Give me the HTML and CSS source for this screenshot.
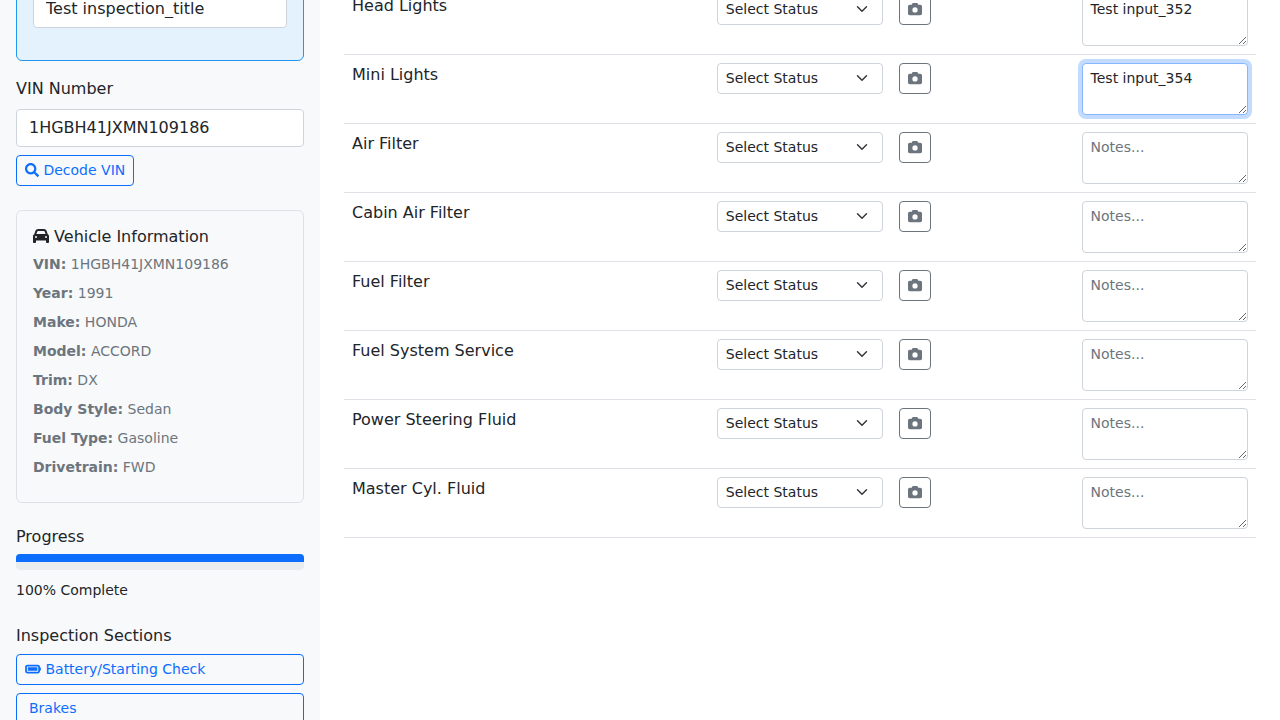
FILE: index.html
```html
<!DOCTYPE html>
<html lang="en">
<head>
<meta charset="utf-8">
<meta name="viewport" content="width=device-width, initial-scale=1">
<title>Vehicle Inspection</title>
<link rel="stylesheet" href="styles.css">
</head>
<body>
<svg class="sprite" aria-hidden="true">
  <symbol id="camera" viewBox="0 0 512 512"><path d="M149.1 64.8L138.7 96H64C28.7 96 0 124.7 0 160V416c0 35.3 28.7 64 64 64H448c35.3 0 64-28.7 64-64V160c0-35.3-28.7-64-64-64H373.3L362.9 64.8C356.4 45.2 338.1 32 317.4 32H194.6c-20.7 0-39 13.2-45.5 32.8zM256 192a96 96 0 1 1 0 192 96 96 0 1 1 0-192z"/></symbol>
</svg>
<div class="app">
  <aside class="sidebar">
    <div class="sidebar-content">
      <div class="title-card">
        <input class="input" type="text" value="Test inspection_title" aria-label="Inspection title">
      </div>
      <div class="vin">
        <label class="label" for="vin">VIN Number</label>
        <input class="input" id="vin" type="text" value="1HGBH41JXMN109186">
        <button class="btn btn-primary" type="button"><svg class="icon" viewBox="0 0 512 512" aria-hidden="true"><path d="M505 442.7L405.3 343c-4.5-4.5-10.6-7-17-7H372c27.6-35.3 44-79.7 44-128C416 93.1 322.9 0 208 0S0 93.1 0 208s93.1 208 208 208c48.3 0 92.7-16.4 128-44v16.3c0 6.4 2.5 12.5 7 17l99.7 99.7c9.4 9.4 24.6 9.4 33.9 0l28.3-28.3c9.4-9.4 9.4-24.6.1-34zM208 336c-70.7 0-128-57.2-128-128 0-70.7 57.2-128 128-128 70.7 0 128 57.2 128 128 0 70.7-57.2 128-128 128z"/></svg> Decode VIN</button>
      </div>
      <section class="info-card">
        <h2 class="heading"><svg class="icon icon-lg" viewBox="0 0 512 512" aria-hidden="true"><path d="M135.2 117.4L109.1 192H402.9l-26.1-74.6C372.3 104.6 360.2 96 346.6 96H165.4c-13.6 0-25.7 8.6-30.2 21.4zM39.6 196.8L74.8 96.3C88.3 57.8 124.6 32 165.4 32H346.6c40.8 0 77.1 25.8 90.6 64.3l35.2 100.5c23.2 9.6 39.6 32.5 39.6 59.2V400v48c0 17.7-14.3 32-32 32H448c-17.7 0-32-14.3-32-32V400H96v48c0 17.7-14.3 32-32 32H32c-17.7 0-32-14.3-32-32V400 256c0-26.7 16.4-49.6 39.6-59.2zM128 288a32 32 0 1 0 -64 0 32 32 0 1 0 64 0zm288 32a32 32 0 1 0 0-64 32 32 0 1 0 0 64z"/></svg> Vehicle Information</h2>
        <p class="detail"><strong>VIN:</strong> 1HGBH41JXMN109186</p>
        <p class="detail"><strong>Year:</strong> 1991</p>
        <p class="detail"><strong>Make:</strong> HONDA</p>
        <p class="detail"><strong>Model:</strong> ACCORD</p>
        <p class="detail"><strong>Trim:</strong> DX</p>
        <p class="detail"><strong>Body Style:</strong> Sedan</p>
        <p class="detail"><strong>Fuel Type:</strong> Gasoline</p>
        <p class="detail"><strong>Drivetrain:</strong> FWD</p>
      </section>
      <section class="progress-block">
        <h2 class="heading">Progress</h2>
        <div class="progress" role="progressbar" aria-label="Progress" aria-valuenow="100" aria-valuemin="0" aria-valuemax="100">
          <div class="progress-bar" style="width: 100%"></div>
        </div>
        <p class="progress-text">100% Complete</p>
      </section>
      <nav class="sections">
        <h2 class="heading">Inspection Sections</h2>
        <button class="btn btn-primary btn-block" type="button"><svg class="icon icon-wide" viewBox="0 0 576 512" aria-hidden="true"><path d="M464 160c8.8 0 16 7.2 16 16V336c0 8.8-7.2 16-16 16H80c-8.8 0-16-7.2-16-16V176c0-8.8 7.2-16 16-16H464zM80 96C35.8 96 0 131.8 0 176V336c0 44.2 35.8 80 80 80H464c44.2 0 80-35.8 80-80V320c17.7 0 32-14.3 32-32V224c0-17.7-14.3-32-32-32V176c0-44.2-35.8-80-80-80H80zm368 96H96V320H448V192z"/></svg> Battery/Starting Check</button>
        <button class="btn btn-primary btn-block" type="button"><span class="icon-empty"></span>Brakes</button>
      </nav>
    </div>
  </aside>
  <main class="main">
    <table class="checks">
      <colgroup><col class="col-name"><col class="col"><col class="col"><col class="col"></colgroup>
      <tbody>
        <tr><td>Head Lights</td><td><select class="select" aria-label="Head Lights status"><option>Select Status</option></select></td><td><button class="btn btn-photo" type="button" aria-label="Add photo"><svg class="icon"><use href="#camera"/></svg></button></td><td><textarea class="notes" rows="2" placeholder="Notes..." aria-label="Head Lights notes">Test input_352</textarea></td></tr>
        <tr><td>Mini Lights</td><td><select class="select" aria-label="Mini Lights status"><option>Select Status</option></select></td><td><button class="btn btn-photo" type="button" aria-label="Add photo"><svg class="icon"><use href="#camera"/></svg></button></td><td><textarea class="notes active" rows="2" placeholder="Notes..." aria-label="Mini Lights notes">Test input_354</textarea></td></tr>
        <tr><td>Air Filter</td><td><select class="select" aria-label="Air Filter status"><option>Select Status</option></select></td><td><button class="btn btn-photo" type="button" aria-label="Add photo"><svg class="icon"><use href="#camera"/></svg></button></td><td><textarea class="notes" rows="2" placeholder="Notes..." aria-label="Air Filter notes"></textarea></td></tr>
        <tr><td>Cabin Air Filter</td><td><select class="select" aria-label="Cabin Air Filter status"><option>Select Status</option></select></td><td><button class="btn btn-photo" type="button" aria-label="Add photo"><svg class="icon"><use href="#camera"/></svg></button></td><td><textarea class="notes" rows="2" placeholder="Notes..." aria-label="Cabin Air Filter notes"></textarea></td></tr>
        <tr><td>Fuel Filter</td><td><select class="select" aria-label="Fuel Filter status"><option>Select Status</option></select></td><td><button class="btn btn-photo" type="button" aria-label="Add photo"><svg class="icon"><use href="#camera"/></svg></button></td><td><textarea class="notes" rows="2" placeholder="Notes..." aria-label="Fuel Filter notes"></textarea></td></tr>
        <tr><td>Fuel System Service</td><td><select class="select" aria-label="Fuel System Service status"><option>Select Status</option></select></td><td><button class="btn btn-photo" type="button" aria-label="Add photo"><svg class="icon"><use href="#camera"/></svg></button></td><td><textarea class="notes" rows="2" placeholder="Notes..." aria-label="Fuel System Service notes"></textarea></td></tr>
        <tr><td>Power Steering Fluid</td><td><select class="select" aria-label="Power Steering Fluid status"><option>Select Status</option></select></td><td><button class="btn btn-photo" type="button" aria-label="Add photo"><svg class="icon"><use href="#camera"/></svg></button></td><td><textarea class="notes" rows="2" placeholder="Notes..." aria-label="Power Steering Fluid notes"></textarea></td></tr>
        <tr><td>Master Cyl. Fluid</td><td><select class="select" aria-label="Master Cyl. Fluid status"><option>Select Status</option></select></td><td><button class="btn btn-photo" type="button" aria-label="Add photo"><svg class="icon"><use href="#camera"/></svg></button></td><td><textarea class="notes" rows="2" placeholder="Notes..." aria-label="Master Cyl. Fluid notes"></textarea></td></tr>
      </tbody>
    </table>
  </main>
</div>
</body>
</html>
```
FILE: styles.css
```css
*, *::before, *::after { box-sizing: border-box; }

body {
  margin: 0;
  font-family: "DejaVu Sans", sans-serif;
  font-size: 16px;
  line-height: 24px;
  color: #212529;
  background: #fff;
}

input, select, textarea, button { font: inherit; color: inherit; margin: 0; }

.sprite { display: none; }

.app { display: flex; height: 100vh; overflow: hidden; }

/* Both panes are scrolled past their first pixels. */
.sidebar {
  flex: 0 0 320px;
  padding: 0 16px;
  background: #f8f9fa;
  overflow: hidden;
}
.sidebar-content { margin-top: -27px; }
.main { flex: 1; min-width: 0; padding: 0 24px; overflow: hidden; }

.title-card {
  padding: 16px 16px 32px;
  margin-bottom: 16px;
  background: #e3f2fd;
  border: 1px solid #2196f3;
  border-radius: 6px;
}

.input {
  display: block;
  width: 100%;
  height: 38px;
  padding: 5px 12px 7px;
  border: 1px solid #ced4da;
  border-radius: 4px;
  background: #fff;
}

.label { display: block; margin-bottom: 8px; }
.vin { margin-bottom: 24px; }
.vin .btn { margin-top: 8px; }

.btn {
  display: block;
  padding: 4px 8px;
  border: 1px solid currentColor;
  border-radius: 4px;
  background: transparent;
  font-size: 14px;
  line-height: 21px;
  cursor: pointer;
}
.btn-primary { color: #0d6efd; }
.btn-photo { color: #6c757d; }
.btn-block { width: 100%; margin-bottom: 8px; text-align: left; }

.icon { width: 14px; height: 14px; fill: currentColor; vertical-align: -2px; }
.icon-lg { width: 16px; height: 16px; }
.icon-wide { width: 16px; }
.icon-empty { display: inline-block; width: 4px; }

.heading { margin: 0 0 8px; font-size: 16px; font-weight: 400; line-height: 19px; }

.info-card {
  padding: 16px;
  margin-bottom: 24px;
  border: 1px solid #dee2e6;
  border-radius: 6px;
}
.detail { margin: 0 0 8px; font-size: 14px; line-height: 21px; color: #6c757d; }

.progress-block { margin-bottom: 24px; }
.progress {
  height: 16px;
  margin-bottom: 8px;
  border-radius: 4px;
  background: #e9ecef;
  overflow: hidden;
}
.progress-bar { height: 8px; background: #0d6efd; }
.progress-text { margin: 0; font-size: 14px; line-height: 24px; }
.sections .heading { line-height: 20px; }

.checks { width: 100%; margin-top: -14px; border-collapse: separate; border-spacing: 0; table-layout: fixed; }
.col-name { width: 40%; }
.col { width: 20%; }
.checks td { padding: 8px; vertical-align: top; border-bottom: 1px solid #dee2e6; }

.select {
  display: block;
  width: 100%;
  height: 31px;
  padding: 4px 36px 4px 8px;
  border: 1px solid #ced4da;
  border-radius: 4px;
  font-size: 14px;
  line-height: 21px;
  appearance: none;
  background: #fff url("data:image/svg+xml,%3Csvg xmlns='http://www.w3.org/2000/svg' viewBox='0 0 16 16'%3E%3Cpath fill='none' stroke='%23343a40' stroke-linecap='round' stroke-linejoin='round' stroke-width='2' d='m2 5 6 6 6-6'/%3E%3C/svg%3E") no-repeat right 12px top 8px / 16px 12px;
}

.notes {
  display: block;
  width: 100%;
  min-height: 31px;
  padding: 4px 8px;
  border: 1px solid #ced4da;
  border-radius: 4px;
  background: #fff;
  font-size: 14px;
  line-height: 21px;
  resize: vertical;
}
.notes::placeholder { color: #6c757d; opacity: 1; }
.notes:focus, .notes.active {
  border-color: #86b7fe;
  outline: 0;
  box-shadow: 0 0 0 4px rgba(13, 110, 253, 0.25);
}
```
